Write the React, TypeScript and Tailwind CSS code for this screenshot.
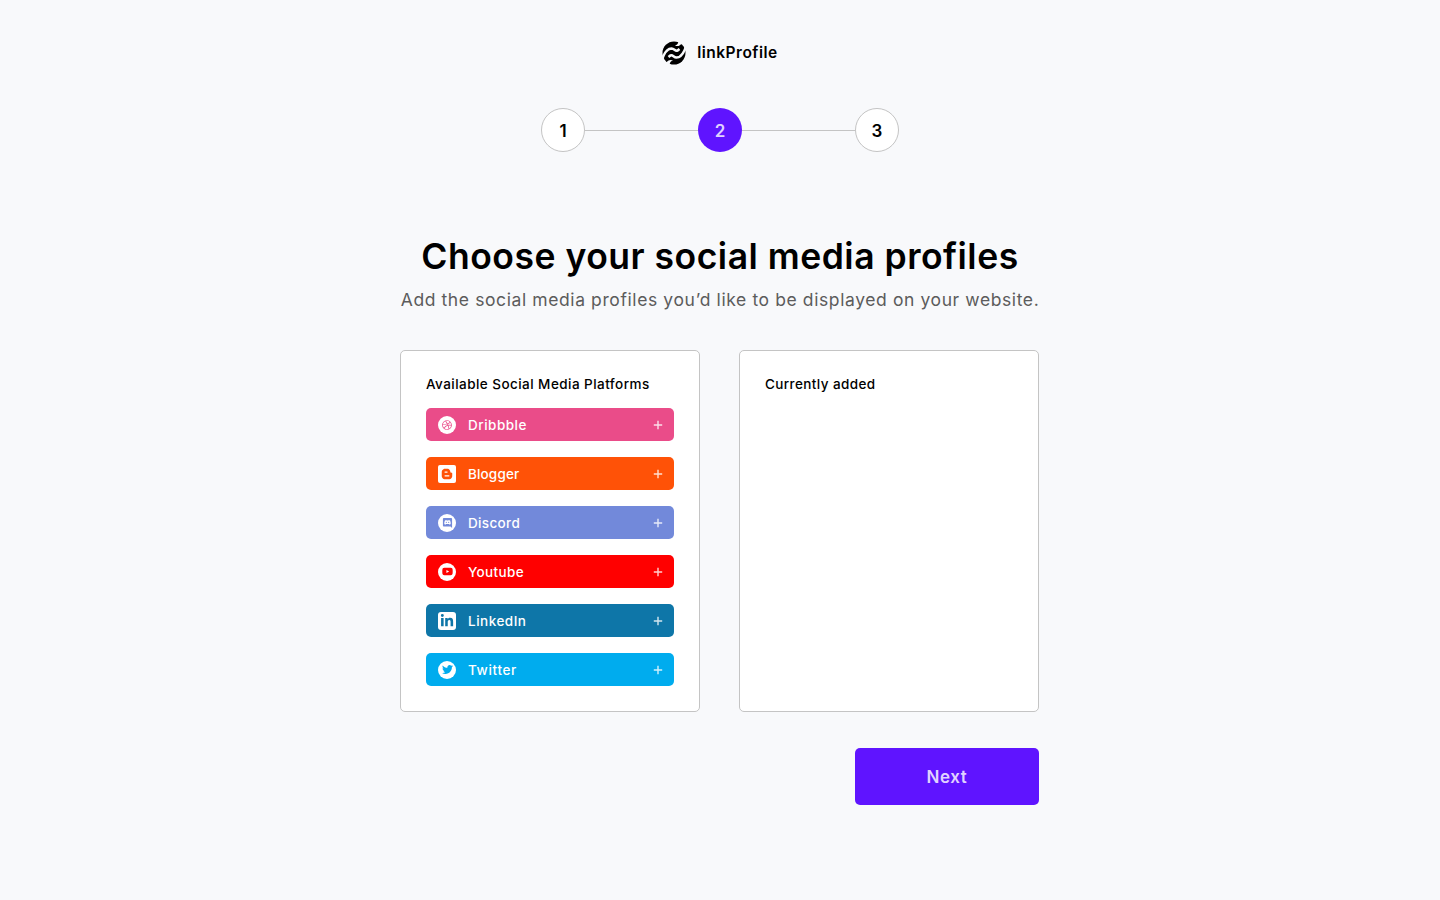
import type { ComponentType } from "react";
import { FaDribbble, FaBloggerB, FaYoutube, FaLinkedinIn, FaTwitter } from "react-icons/fa";

type IconProps = { className?: string };

type Platform = {
  name: string;
  row: string;
  badge: string;
  icon: ComponentType<IconProps>;
  iconClass: string;
  label: string;
};

function DiscordMark({ className }: IconProps) {
  return (
    <svg viewBox="0 0 12 12" className={className} fill="currentColor">
      <path
        fillRule="evenodd"
        d="M2.2 1h7.6c.7 0 1.2.5 1.2 1.2V12L9.3 10.4H2.2C1.5 10.400 1 9.900 1 9.200v-7C1 1.500 1.500 1 2.200 1zM3.200 3.700C2.600 4.900 2.400 6.200 2.500 7.500c.5.4 1 .6 1.600.7l.4-.7h3l.4.7c.6-.1 1.100-.3 1.600-.7.1-1.300-.1-2.600-.7-3.800-.5-.3-1-.5-1.500-.5l-.3.500h-2l-.3-.5c-.5 0-1 .2-1.500.5zM4.700 5.100a.65.700 0 1 1 0 1.400.65.700 0 0 1 0-1.400zM7.300 5.100a.65.700 0 1 1 0 1.400.65.700 0 0 1 0-1.400z"
      />
    </svg>
  );
}

const platforms: Platform[] = [
  { name: "Dribbble", row: "bg-[#ea4c89]", badge: "rounded-full", icon: FaDribbble, iconClass: "size-[10px] text-[#ea4c89]", label: "tracking-[0.5px]" },
  { name: "Blogger", row: "bg-[#ff5207]", badge: "rounded-[2px]", icon: FaBloggerB, iconClass: "size-[12px] text-[#ff5207]", label: "tracking-[0.15px]" },
  { name: "Discord", row: "bg-[#7289da]", badge: "rounded-full", icon: DiscordMark, iconClass: "size-[11px] text-[#7289da]", label: "tracking-[0.35px]" },
  { name: "Youtube", row: "bg-[#ff0000]", badge: "rounded-full", icon: FaYoutube, iconClass: "size-[11px] text-[#ff0000]", label: "tracking-[0.35px]" },
  { name: "LinkedIn", row: "bg-[#0e76a8]", badge: "rounded-[3px]", icon: FaLinkedinIn, iconClass: "size-[14px] text-[#0e76a8]", label: "tracking-[0.5px]" },
  { name: "Twitter", row: "bg-[#00acee]", badge: "rounded-full", icon: FaTwitter, iconClass: "size-[11px] text-[#00acee]", label: "tracking-[0.65px]" },
];

function Logo() {
  return (
    <svg viewBox="0 0 24 24" className="size-6">
      <circle cx="12" cy="12" r="11.500" fill="#000" />
      <g fill="none" stroke="#f8f9fb" strokeWidth="2.500">
        <path d="M-.5 20C2 12 5.500 7.500 9.500 7.500 12.500 7.600 13 10.600 15.500 9.600L17.500 8" />
        <path d="M24.500 4C22 12 18.500 16.500 14.500 16.500 11.500 16.400 11 13.400 8.500 14.400L6.500 16" />
      </g>
      <path d="M13 4.200C15 4 16 3 16.500 0L20 2.500 17.500 4.500C16 5.500 14 5.200 13 4.200z" fill="#f8f9fb" />
      <path d="M11 19.800C9 20 8 21 7.500 24L4 21.500 6.500 19.500C8 18.500 10 18.800 11 19.800z" fill="#f8f9fb" />
    </svg>
  );
}

function Step({ n, active }: { n: number; active?: boolean }) {
  return (
    <div
      className={
        active
          ? "flex size-11 items-center justify-center rounded-full bg-[#5f14ff] text-[17px] font-semibold text-[#e0d2ff]"
          : "flex size-11 items-center justify-center rounded-full border border-[#c4c4c4] bg-white text-[17px] font-semibold text-black"
      }
    >
      <span className="pt-[3px]">{n}</span>
    </div>
  );
}

export default function App() {
  return (
    <main className="flex h-[900px] w-full flex-col items-center bg-[#f8f9fb] pt-10 font-['Inter','Liberation_Sans',sans-serif] text-black">
      <header className="flex h-[26px] items-center gap-[11px]">
        <Logo />
        <span className="text-[15.5px] leading-[26px] font-semibold tracking-[0.5px]">linkProfile</span>
      </header>

      <nav className="mt-[42px] flex items-center">
        <Step n={1} />
        <div className="h-px w-[113px] bg-[#c4c4c4]" />
        <Step n={2} active />
        <div className="h-px w-[113px] bg-[#c4c4c4]" />
        <Step n={3} />
      </nav>

      <h1 className="mt-[83px] text-[35.5px] leading-[44px] font-semibold tracking-[0.5px] whitespace-nowrap">
        Choose your social media profiles
      </h1>
      <p className="mt-[9px] text-[17.5px] leading-6 tracking-[0.6px] whitespace-nowrap text-[#5c5c5c]">
        Add the social media profiles you’d like to be displayed on your website.
      </p>

      <div className="mt-[38px] mr-px flex w-[639px] justify-between">
        <section className="h-[362px] w-[300px] rounded-[5px] border border-[#c4c4c4] bg-white px-[25px] pt-[23px]">
          <h2 className="text-[13.5px] leading-5 font-medium tracking-[0.45px] whitespace-nowrap">Available Social Media Platforms</h2>
          <ul className="mt-[14px] flex flex-col gap-4">
            {platforms.map(({ name, row, badge, icon: Icon, iconClass, label }) => (
              <li key={name} className={`flex h-[33px] items-center rounded-[5px] pr-[11px] pl-3 text-white ${row}`}>
                <span className={`flex size-[18px] items-center justify-center bg-white ${badge}`}>
                  <Icon className={iconClass} />
                </span>
                <span className={`ml-3 flex-1 pt-px text-[13.5px] leading-5 font-medium ${label}`}>{name}</span>
                <svg viewBox="0 0 10 10" className="mt-px size-[10px]" stroke="#ffffffd0" strokeWidth="1.400">
                  <path d="M5 0.800v8.400M0.800 5h8.400" />
                </svg>
              </li>
            ))}
          </ul>
        </section>
        <section className="h-[362px] w-[300px] rounded-[5px] border border-[#c4c4c4] bg-white px-[25px] pt-[23px]">
          <h2 className="text-[13.5px] leading-5 font-medium tracking-[0.4px]">Currently added</h2>
        </section>
      </div>

      <div className="mt-9 mr-px flex w-[639px] justify-end">
        <button className="h-[57px] w-[184px] rounded-[5px] bg-[#5f14ff] pt-0.5 text-[17px] font-semibold tracking-[0.6px] text-[#e0d2ff]">
          Next
        </button>
      </div>
    </main>
  );
}
